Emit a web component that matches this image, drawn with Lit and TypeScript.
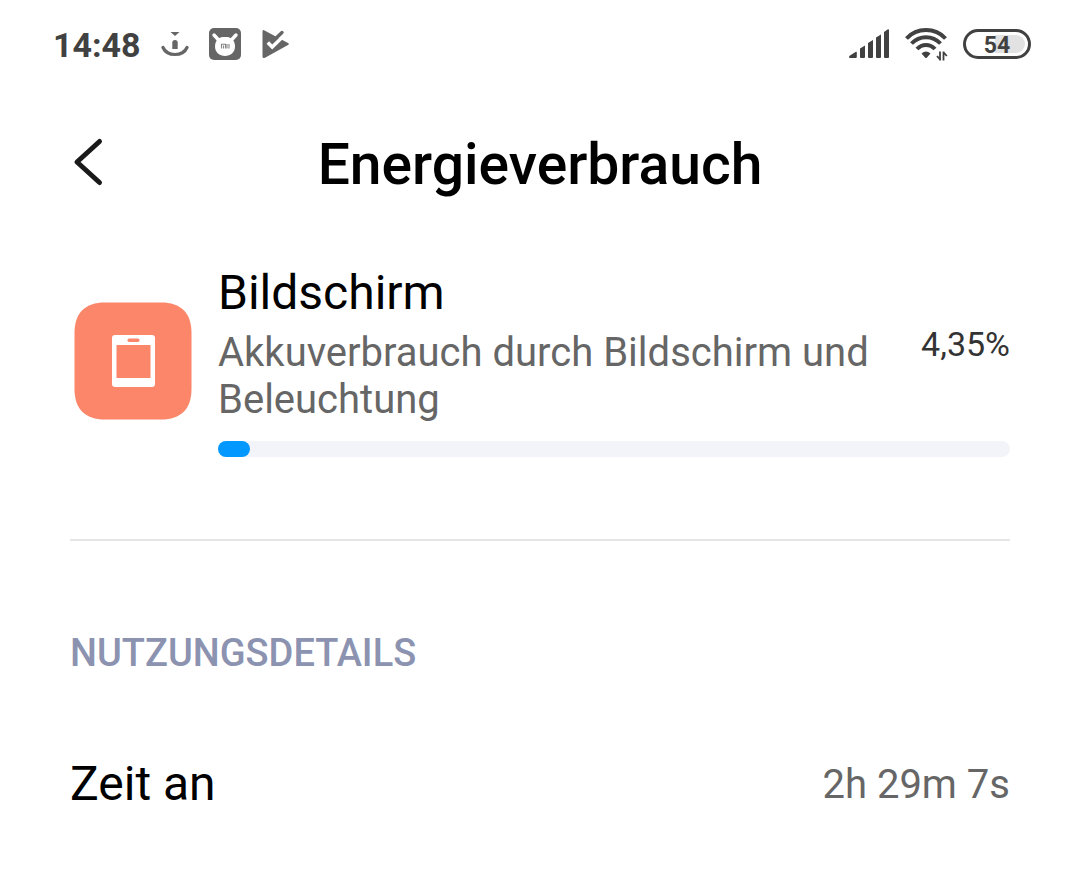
import { LitElement, html, css } from "lit";
import { customElement, property, state } from "lit/decorators.js";

@customElement("status-bar")
class StatusBar extends LitElement {
  @property() time = "";
  @property({ type: Number }) battery = 0;

  static styles = css`
    :host {
      display: block;
    }
    .bar {
      display: flex;
      align-items: center;
      justify-content: space-between;
      height: 88px;
      padding: 0 49px 0 53px;
      color: #414141;
    }
    .group {
      display: flex;
      align-items: center;
    }
    .left {
      gap: 20px;
    }
    .right {
      gap: 15px;
    }
    .time {
      font-size: 34px;
      line-height: 40px;
      font-weight: 700;
      padding-top: 2px;
    }
    svg {
      display: block;
    }
    .battery {
      box-sizing: border-box;
      width: 68px;
      height: 30px;
      padding: 3px;
      border: 3px solid #414141;
      border-radius: 15px;
    }
    .cell {
      display: grid;
      justify-items: end;
      height: 18px;
    }
    .charge {
      grid-area: 1 / 1;
      height: 18px;
      border-radius: 0 9px 9px 0;
      background: #e2e2e2;
    }
    .level {
      grid-area: 1 / 1;
      justify-self: center;
      font-size: 23px;
      line-height: 21px;
      font-weight: 700;
    }
  `;

  render() {
    return html`
      <div class="bar">
        <div class="group left">
          <span class="time">${this.time}</span>
          <svg width="28" height="32" viewBox="161 28 28 32" fill="#666" aria-hidden="true">
            <path d="M170.500 32h9l-4.500 4z" />
            <path d="M172.300 49v-6.500q0-2.500 2.700-2.500t2.700 2.500V49z" />
            <path d="M163 47.500C165 52 169.500 54.500 175 54.500S185 52 187 47.500" fill="none" stroke="#666" stroke-width="3.200" stroke-linecap="round" />
          </svg>
          <svg width="32" height="32" viewBox="0 0 32 32" aria-hidden="true">
            <rect width="32" height="32" rx="5" fill="#666" />
            <path d="M5 7l5.500 6M27 7l-5.500 6" stroke="#fff" stroke-width="3.400" stroke-linecap="round" />
            <path d="M16 9c3 0 5 .3 7 2 2 1.800 3 4.500 3 7.500 0 5.700-4.500 9.500-10 9.500s-10-3.800-10-9.500c0-3 1-5.700 3-7.500C11 9.300 13 9 16 9z" fill="#fff" />
            <path d="M12.500 20.500v-4.300h4v4.300M14.500 17.500v3M18 16v4.500M20 16v4.500" fill="none" stroke="#858585" stroke-width="1.100" />
          </svg>
          <svg width="28" height="32" viewBox="261 28 28 32" aria-hidden="true">
            <path d="M262.500 31.500q0-2.200 2-1.100L288 43q1.800 1 0 2L265 57.700q-2.500 1.200-2.500-1.100z" fill="#666" />
            <path d="M267.800 42.500l4.400 4.500L285 34.500" fill="none" stroke="#fff" stroke-width="3.600" />
            <path d="M272.500 41.500L282 32.500" fill="none" stroke="#666" stroke-width="3.400" stroke-linecap="round" />
          </svg>
        </div>
        <div class="group right">
          <svg width="41" height="30" viewBox="849 29 41 30" fill="#414141" aria-label="Mobilfunk" role="img">
            <path d="M849 57q0-1 1-1.500l5.500-3.500q1.300-.7 1.300.8V57q0 1-1 1H850q-1 0-1-1z" />
            <path d="M860 48.500l5-3V57q0 1-1 1h-3q-1 0-1-1zM868 43l5-3V57q0 1-1 1h-3q-1 0-1-1zM876 37.500l5-3V57q0 1-1 1h-3q-1 0-1-1zM884 32l3.500-2.500q1.500-.8 1.500.8V57q0 1-1 1h-3q-1 0-1-1z" />
          </svg>
          <svg width="43" height="34" viewBox="905 28 43 34" fill="none" stroke="#414141" stroke-width="4" aria-label="WLAN" role="img">
            <path d="M906.500 39.500C917 28.300 935 28.300 945.500 39.500" />
            <path d="M911.500 44.500C919.500 36 932.500 36 940.500 44.500" />
            <path d="M917 50C922 44.500 930 44.500 935 50" />
            <path d="M921.500 54.500q4.500-3.800 9 0l-3.500 4q-1 1-2 0z" fill="#414141" stroke="none" />
            <path d="M940 52.500v9M940.500 61l-3.500-4M943.500 61.500v-9M943.300 53l3.500 4" stroke-width="1.800" />
          </svg>
          <div class="battery" role="img" aria-label="Akku ${this.battery} %">
            <div class="cell">
              <div class="charge" style="width:${this.battery}%"></div>
              <span class="level">${this.battery}</span>
            </div>
          </div>
        </div>
      </div>
    `;
  }
}

@customElement("usage-summary")
class UsageSummary extends LitElement {
  @property() name = "";
  @property() description = "";
  @property({ type: Number }) share = 0;

  static styles = css`
    :host {
      display: block;
    }
    .summary {
      display: grid;
      grid-template-columns: 126px 1fr;
      column-gap: 22px;
      align-items: center;
    }
    .icon {
      display: block;
    }
    .row {
      display: flex;
      align-items: center;
      justify-content: space-between;
      gap: 40px;
    }
    .name {
      margin: 0;
      font-size: 48px;
      line-height: 56px;
      font-weight: 400;
      color: #000;
    }
    .description {
      margin: 8px 0 0;
      font-size: 40px;
      line-height: 47px;
      color: #666;
    }
    .share {
      font-size: 34px;
      line-height: 40px;
      color: #333;
    }
    .track {
      height: 16px;
      margin-top: 18px;
      border-radius: 8px;
      background: #f3f4f9;
    }
    .fill {
      height: 16px;
      border-radius: 8px;
      background: #0398ff;
    }
  `;

  render() {
    return html`
      <section class="summary">
        <svg class="icon" width="126" height="126" viewBox="70 298 126 126" aria-hidden="true">
          <path d="M105 302.500h56C181 302.500 191.500 313 191.500 333v56C191.500 409 181 419.500 161 419.500h-56C85 419.500 74.500 409 74.500 389v-56C74.500 313 85 302.500 105 302.500z" fill="#fb8669" />
          <rect x="112" y="335" width="43" height="52" rx="3" fill="#fff" />
          <rect x="116.500" y="345" width="34" height="33" fill="#fb8669" />
          <rect x="127.500" y="338.500" width="12" height="3.500" rx="1.700" fill="#fb8669" />
        </svg>
        <div>
          <div class="row">
            <div>
              <h2 class="name">${this.name}</h2>
              <p class="description">${this.description}</p>
            </div>
            <span class="share">${this.share.toLocaleString("de-DE")}%</span>
          </div>
          <div class="track" role="progressbar" aria-label=${this.name} aria-valuemin="0" aria-valuemax="100" aria-valuenow=${this.share}>
            <div class="fill" style="width:${Math.floor(this.share)}%"></div>
          </div>
        </div>
      </section>
    `;
  }
}

@customElement("app-root")
class AppRoot extends LitElement {
  @state() private details = [{ label: "Zeit an", value: "2h 29m 7s" }];

  static styles = css`
    :host {
      display: block;
      min-height: 100vh;
      background: #fff;
      font-family: Roboto, "Noto Sans", sans-serif;
    }
    .header {
      display: grid;
      grid-template-columns: 64px 1fr 64px;
      align-items: center;
      padding: 41px 70px 0;
    }
    .back {
      width: 64px;
      height: 68px;
      padding: 0;
      border: 0;
      background: none;
      cursor: pointer;
    }
    .back svg {
      display: block;
    }
    .title {
      margin: 0;
      font-size: 57px;
      line-height: 72px;
      font-weight: 500;
      text-align: center;
      color: #000;
    }
    .content {
      padding: 64px 70px 0;
    }
    .divider {
      margin: 82px 0 0;
      border: 0;
      border-top: 2px solid #e5e5e5;
    }
    .section {
      margin: 88px 0 0;
      font-size: 38px;
      line-height: 48px;
      font-weight: 500;
      color: #8c93b0;
    }
    .details {
      margin: 79px 0 0;
    }
    .detail {
      display: flex;
      align-items: center;
      justify-content: space-between;
    }
    .label {
      font-size: 48px;
      line-height: 56px;
      color: #000;
    }
    .value {
      margin: 0;
      font-size: 40px;
      line-height: 47px;
      color: #666;
    }
  `;

  render() {
    return html`
      <status-bar time="14:48" .battery=${54}></status-bar>
      <header class="header">
        <button class="back" type="button" aria-label="Zurück">
          <svg width="36" height="68" viewBox="0 0 36 68" aria-hidden="true">
            <path d="M29.500 10.500L7 31L29.500 51.500" fill="none" stroke="#1a1a1a" stroke-width="5" stroke-linecap="round" stroke-linejoin="round" />
          </svg>
        </button>
        <h1 class="title">Energieverbrauch</h1>
      </header>
      <main class="content">
        <usage-summary
          name="Bildschirm"
          description="Akkuverbrauch durch Bildschirm und Beleuchtung"
          .share=${4.35}
        ></usage-summary>
        <hr class="divider" />
        <h2 class="section">NUTZUNGSDETAILS</h2>
        <dl class="details">
          ${this.details.map(
            (d) => html`<div class="detail">
              <dt class="label">${d.label}</dt>
              <dd class="value">${d.value}</dd>
            </div>`
          )}
        </dl>
      </main>
    `;
  }
}
